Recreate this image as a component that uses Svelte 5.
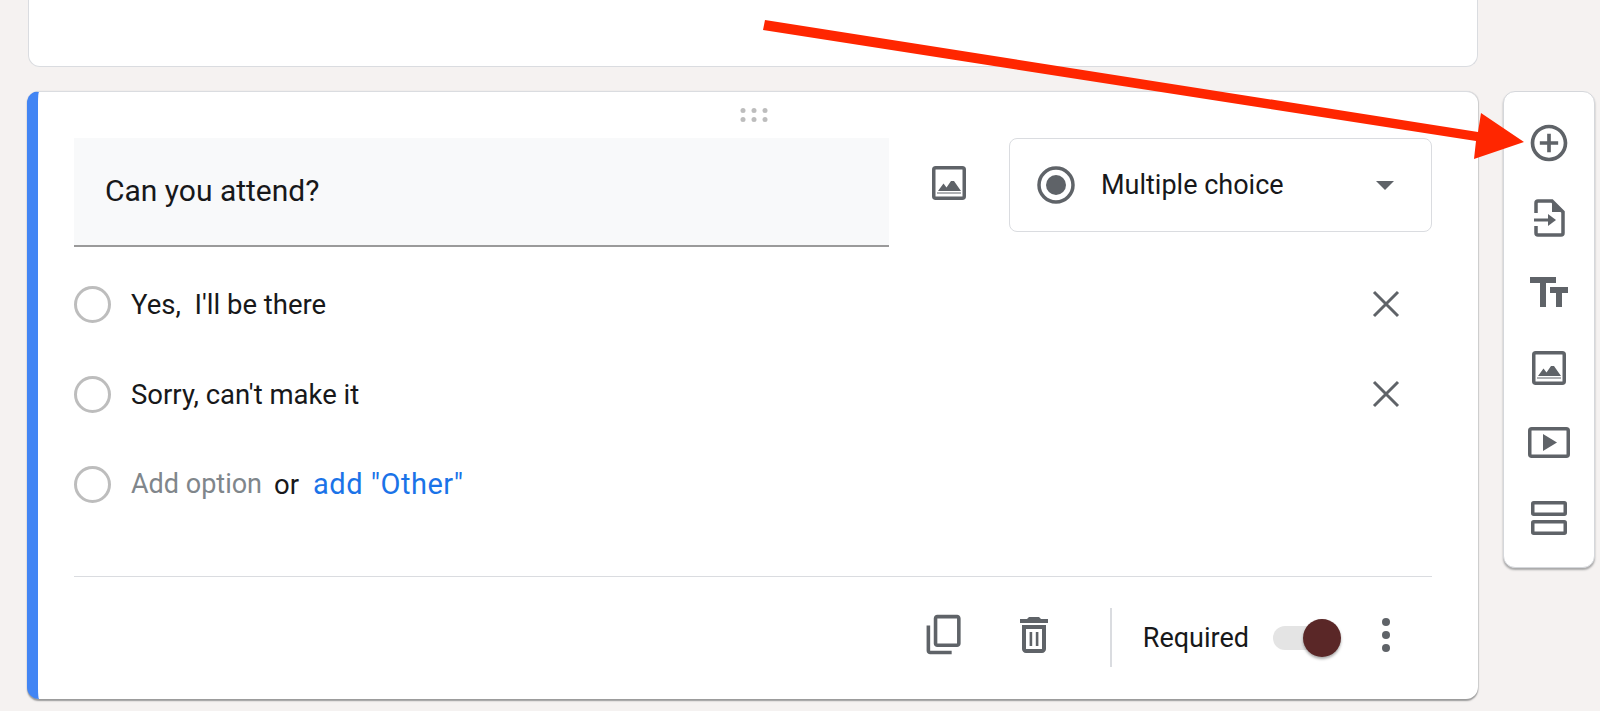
<script>
	const options = ["Yes,  I'll be there", "Sorry, can't make it"];
</script>

{#snippet imageIcon(size)}
	<svg width={size} height={size} viewBox="0 0 34 34">
		<rect x="1.750" y="1.750" width="30.500" height="30.500" rx="2" fill="none" stroke="#5f6368" stroke-width="3.500" />
		<path d="M6 25l5.500-7.500 3 4 4.500-6.500 3 0 7 10z" fill="#5f6368" />
		<path d="M5 27h24" stroke="#5f6368" stroke-width="1" />
	</svg>
{/snippet}

<div class="page">
	<div class="cards">
		<div class="top-card"></div>

		<section class="card">
			<div class="drag">
				<svg width="28" height="14" viewBox="0 0 28 14" fill="#bdbdbd">
					<circle cx="3" cy="2.500" r="2.500" /><circle cx="14" cy="2.500" r="2.500" /><circle cx="25" cy="2.500" r="2.500" />
					<circle cx="3" cy="11.500" r="2.500" /><circle cx="14" cy="11.500" r="2.500" /><circle cx="25" cy="11.500" r="2.500" />
				</svg>
			</div>

			<div class="head">
				<div class="question">Can you attend?</div>
				<div class="head-img">{@render imageIcon(34)}</div>
				<div class="select">
					<svg class="select-radio" width="38" height="38" viewBox="0 0 38 38">
						<circle cx="19" cy="19" r="17" fill="none" stroke="#5f6368" stroke-width="3.500" />
						<circle cx="19" cy="19" r="10" fill="#5f6368" />
					</svg>
					<span class="select-label">Multiple choice</span>
					<span class="caret"></span>
				</div>
			</div>

			<div class="options">
				{#each options as opt}
					<div class="option">
						<span class="radio"></span>
						<span class="opt-text">{opt}</span>
						<svg class="remove" width="28" height="28" viewBox="0 0 28 28">
							<path d="M2 2l24 24M26 2L2 26" stroke="#5f6368" stroke-width="3" fill="none" />
						</svg>
					</div>
				{/each}
				<div class="option">
					<span class="radio"></span>
					<span class="opt-text add">Add option</span>
					<span class="opt-text or">or</span>
					<span class="opt-text link">add "Other"</span>
				</div>
			</div>

			<div class="footer">
				<svg class="copy" width="43" height="43" viewBox="0 0 24 24" fill="#5f6368">
					<path d="M16 1H4c-1.100 0-2 .9-2 2v14h2V3h12V1zm3 4H8c-1.100 0-2 .9-2 2v14c0 1.100.9 2 2 2h11c1.100 0 2-.9 2-2V7c0-1.100-.9-2-2-2zm0 16H8V7h11v14z" transform="matrix(1 0 0 -1 0 24)" />
				</svg>
				<svg class="trash" width="48" height="48" viewBox="0 0 24 24" fill="#5f6368">
					<path d="M6 19c0 1.100.9 2 2 2h8c1.100 0 2-.9 2-2V7H6v12zM8 9h8v10H8V9zm7.500-5l-1-1h-5l-1 1H5v2h14V4z" />
					<rect x="9.800" y="10.500" width="1.300" height="7" /><rect x="12.900" y="10.500" width="1.300" height="7" />
				</svg>
				<span class="vline"></span>
				<span class="required">Required</span>
				<span class="toggle"><span class="thumb"></span></span>
				<span class="more"><i></i><i></i><i></i></span>
			</div>
		</section>
	</div>

	<aside class="tools">
		<div class="tool">
			<svg width="44" height="44" viewBox="0 0 24 24" fill="#5f6368">
				<path d="M13 7h-2v4H7v2h4v4h2v-4h4v-2h-4V7zm-1-5C6.480 2 2 6.480 2 12s4.480 10 10 10 10-4.480 10-10S17.520 2 12 2zm0 18c-4.410 0-8-3.590-8-8s3.590-8 8-8 8 3.590 8 8-3.590 8-8 8z" />
			</svg>
		</div>
		<div class="tool">
			<svg width="32" height="38" viewBox="0 0 32 38" fill="none" stroke="#5f6368" stroke-width="3.500">
				<path d="M3 14V4a2 2 0 0 1 2-2h14l11 11v21a2 2 0 0 1-2 2H5a2 2 0 0 1-2-2v-7" />
				<path d="M19 2l11 11H19z" fill="#5f6368" stroke="none" />
				<path d="M1 21h17" stroke-width="3" />
				<path d="M15 15l8 6-8 6z" fill="#5f6368" stroke="none" />
			</svg>
		</div>
		<div class="tool">
			<svg width="48" height="48" viewBox="0 0 24 24" fill="#5f6368">
				<path d="M2.500 4v3h5v12h3V7h5V4h-13zm19 5h-9v3h3v7h3v-7h3V9z" />
			</svg>
		</div>
		<div class="tool">{@render imageIcon(34)}</div>
		<div class="tool">
			<svg width="42" height="31" viewBox="0 0 42 31" fill="none">
				<rect x="1.750" y="1.750" width="38.500" height="27.500" rx="2" stroke="#5f6368" stroke-width="3.500" />
				<path d="M15 7l14 8.500-14 8.500z" fill="#5f6368" />
			</svg>
		</div>
		<div class="tool">
			<svg width="36" height="34" viewBox="0 0 36 34" fill="none" stroke="#5f6368" stroke-width="3.500">
				<rect x="1.750" y="1.750" width="32.500" height="11.500" rx="1" />
				<rect x="1.750" y="20.750" width="32.500" height="11.500" rx="1" />
			</svg>
		</div>
	</aside>

	<svg class="arrow" width="1600" height="711" viewBox="0 0 1600 711">
		<path d="M765 20L1478 132L1481 113L1524 142L1474 159L1476 141L763 30z" fill="#ff2600" />
	</svg>
</div>

<style>
	:global(body) {
		background: #f5f2f1;
		font-family: Roboto, "Liberation Sans", sans-serif;
	}

	.page {
		position: relative;
		display: flex;
		height: 711px;
		overflow: hidden;
		padding-left: 27px;
		box-sizing: border-box;
	}

	.cards {
		width: 1451px;
		flex: none;
	}

	.top-card {
		height: 67px;
		margin-left: 1px;
		box-sizing: border-box;
		background: #fff;
		border: 1px solid #dadce0;
		border-top: none;
		border-radius: 0 0 12px 12px;
		margin-bottom: 24px;
	}

	.card {
		height: 608px;
		box-sizing: border-box;
		background: #fff;
		border-left: 11px solid #4285f4;
		border-top: 1px solid #dadce0;
		border-radius: 12px;
		box-shadow: 0 1.500px 1.500px #9a9a9a, 1px 0 1px #d8d8d8;
		padding: 0 46px 0 36px;
	}

	.drag {
		height: 46px;
		display: flex;
		align-items: center;
		justify-content: center;
		margin-left: 666px;
		width: 28px;
	}

	.head {
		display: flex;
		align-items: flex-start;
	}

	.question {
		width: 815px;
		height: 109px;
		box-sizing: border-box;
		background: #f8f9fa;
		border-bottom: 2px solid #9a9a9a;
		padding: 0 0 3px 31px;
		display: flex;
		align-items: center;
		font-size: 30px;
		color: #17181a;
	}

	.head-img {
		margin: 28px 0 0 43px;
		height: 34px;
	}

	.select {
		width: 423px;
		height: 94px;
		box-sizing: border-box;
		margin-left: auto;
		display: flex;
		align-items: center;
		border: 1.500px solid #dadce0;
		border-radius: 8px;
		padding: 0 37px 0 27px;
	}

	.select-label {
		margin-left: 26px;
		font-size: 27px;
		color: #17181a;
	}

	.caret {
		margin-left: auto;
		width: 0;
		height: 0;
		border-left: 9px solid transparent;
		border-right: 9px solid transparent;
		border-top: 9px solid #5f6368;
	}

	.options {
		margin: 12px 0 47px;
	}

	.option {
		height: 90px;
		display: flex;
		align-items: center;
	}

	.radio {
		width: 37px;
		height: 37px;
		box-sizing: border-box;
		border: 3.500px solid #bdbdbd;
		border-radius: 50%;
		margin-right: 20px;
		flex: none;
	}

	.opt-text {
		font-size: 27.500px;
		color: #17181a;
		white-space: pre;
	}

	.add {
		font-size: 27px;
		color: #80868b;
	}

	.or {
		margin-left: 12px;
	}

	.link {
		margin-left: 14px;
		font-size: 29px;
		letter-spacing: 0.5px;
		color: #1a73e8;
	}

	.remove {
		margin-left: auto;
		margin-right: 32px;
	}

	.footer {
		height: 122px;
		border-top: 1.500px solid #dadce0;
		box-sizing: border-box;
		display: flex;
		align-items: center;
	}

	.copy {
		margin-left: auto;
		margin-bottom: 6px;
	}

	.trash {
		margin-left: 44px;
		margin-bottom: 6px;
	}

	.vline {
		width: 1.500px;
		height: 59px;
		background: #dadce0;
		margin-left: 52px;
	}

	.required {
		margin-left: 31px;
		font-size: 27px;
		color: #17181a;
	}

	.toggle {
		width: 52px;
		height: 24px;
		border-radius: 12px;
		background: #e4e4e4;
		margin-left: 24px;
		display: flex;
		align-items: center;
		justify-content: flex-end;
	}

	.thumb {
		width: 38px;
		height: 38px;
		border-radius: 50%;
		background: #5a2727;
		flex: none;
		margin-right: -16px;
		box-shadow: 0 2px 3px rgba(0, 0, 0, 0.35);
	}

	.more {
		display: flex;
		flex-direction: column;
		gap: 5px;
		margin: 0 42px 6px 57px;
	}

	.more i {
		display: block;
		width: 8px;
		height: 8px;
		border-radius: 50%;
		background: #5f6368;
	}

	.tools {
		width: 92px;
		height: 477px;
		margin: 91px 0 0 25px;
		box-sizing: border-box;
		background: #fff;
		border: 1.500px solid #d5d7db;
		border-radius: 12px;
		box-shadow: 0 2px 2px #a8a8a8;
		padding: 13px 0 12px;
		flex: none;
	}

	.tool {
		height: 75px;
		display: flex;
		align-items: center;
		justify-content: center;
	}

	.arrow {
		position: absolute;
		left: 0;
		top: 0;
		pointer-events: none;
	}
</style>
